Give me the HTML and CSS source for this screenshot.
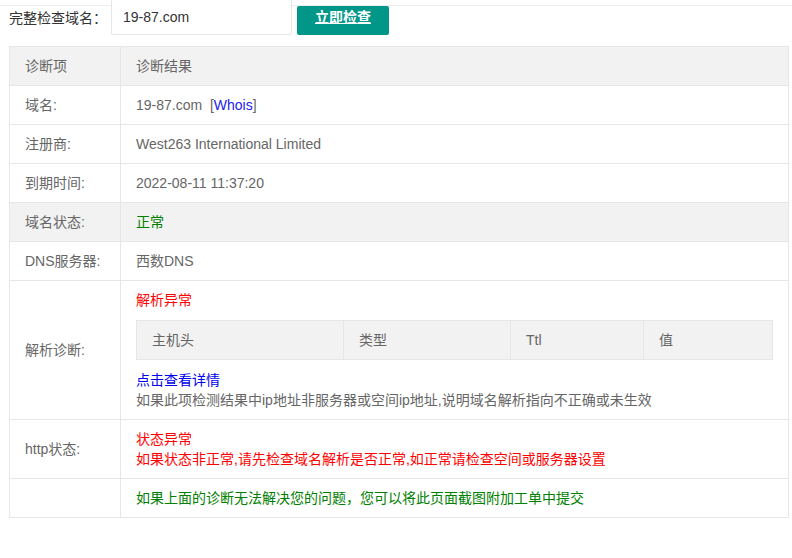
FILE: index.html
```html
<!DOCTYPE html>
<html lang="zh-CN">
<head>
<meta charset="utf-8">
<title>域名诊断</title>
<link rel="stylesheet" href="styles.css">
</head>
<body>
<div class="search">
  <span class="search-label">完整检查域名：</span>
  <div class="search-input">19-87.com</div>
  <div class="search-btn"><span>立即检查</span></div>
</div>
<table class="diag">
  <colgroup><col class="c1"><col></colgroup>
  <thead>
    <tr><th>诊断项</th><th>诊断结果</th></tr>
  </thead>
  <tbody>
    <tr><td>域名:</td><td>19-87.com&nbsp;&nbsp;[<a class="whois">Whois</a>]</td></tr>
    <tr><td>注册商:</td><td>West263 International Limited</td></tr>
    <tr><td>到期时间:</td><td>2022-08-11 11:37:20</td></tr>
    <tr class="hl"><td>域名状态:</td><td><span class="ok">正常</span></td></tr>
    <tr><td>DNS服务器:</td><td>西数DNS</td></tr>
    <tr>
      <td>解析诊断:</td>
      <td>
        <div class="err">解析异常</div>
        <table class="inner">
          <colgroup><col class="i1"><col class="i2"><col class="i3"><col></colgroup>
          <tr><th>主机头</th><th>类型</th><th>Ttl</th><th>值</th></tr>
        </table>
        <div><a class="link">点击查看详情</a></div>
        <div>如果此项检测结果中ip地址非服务器或空间ip地址,说明域名解析指向不正确或未生效</div>
      </td>
    </tr>
    <tr>
      <td>http状态:</td>
      <td>
        <div class="err">状态异常</div>
        <div class="err">如果状态非正常,请先检查域名解析是否正常,如正常请检查空间或服务器设置</div>
      </td>
    </tr>
    <tr><td></td><td><span class="ok">如果上面的诊断无法解决您的问题，您可以将此页面截图附加工单中提交</span></td></tr>
  </tbody>
</table>
</body>
</html>
```
FILE: styles.css
```css
html, body {
  margin: 0;
  padding: 0;
  background: #fff;
}
body {
  font-family: "Liberation Sans", Arial, "Noto Sans CJK SC", sans-serif;
  font-size: 14px;
  color: #666;
}
.search {
  display: flex;
  align-items: center;
  height: 36px;
  margin-top: -1px;
  padding-left: 9px;
  background: linear-gradient(to bottom, transparent 6px, #eeeeee 6px, #eeeeee 7px, transparent 7px);
}
.search-label {
  color: #333;
  width: 102px;
}
.search-input {
  box-sizing: border-box;
  width: 181px;
  height: 36px;
  border: 1px solid #e6e6e6;
  border-radius: 2px;
  background: #fff;
  color: #333;
  padding-left: 11px;
  line-height: 34px;
}
.search-btn {
  box-sizing: border-box;
  align-self: flex-end;
  margin-left: 5px;
  width: 92px;
  height: 29px;
  background: #009688;
  border-radius: 2px;
  color: #fff;
  text-align: center;
  line-height: 22px;
  padding-bottom: 7px;
}
.search-btn span {
  text-decoration: underline;
  font-weight: bold;
}
.diag {
  margin: 11px 0 0 9px;
  width: 780px;
  border-collapse: collapse;
  table-layout: fixed;
}
.diag .c1 { width: 111px; }
.diag th, .diag td {
  border: 1px solid #e6e6e6;
  padding: 9px 15px;
  line-height: 20px;
  text-align: left;
  font-weight: normal;
  vertical-align: middle;
}
.diag thead th { background: #f2f2f2; }
.diag tr.hl td { background: #f2f2f2; }
.whois { color: #2222ee; }
.ok { color: #008000; }
.err { color: #ff0000; }
.link { color: #0000ee; }
.inner {
  width: 100%;
  margin: 10px 0;
  border-collapse: collapse;
  table-layout: fixed;
}
.inner .i1 { width: 207px; }
.inner .i2 { width: 167px; }
.inner .i3 { width: 133px; }
.diag .inner th {
  background: #f2f2f2;
  border: 1px solid #e6e6e6;
  padding: 9px 15px;
  line-height: 20px;
}
```
